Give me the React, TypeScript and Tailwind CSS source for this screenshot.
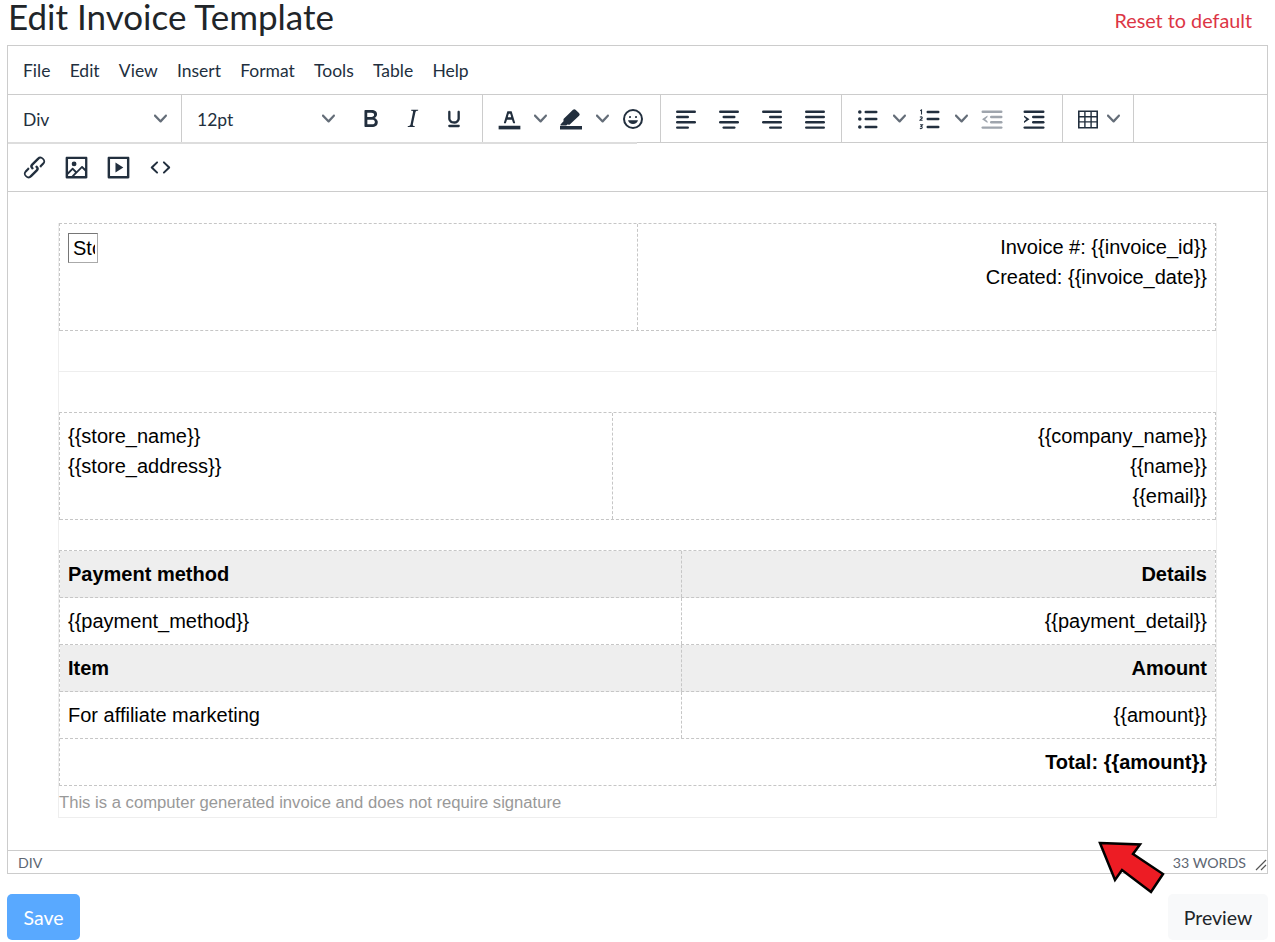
import type { ReactNode } from 'react';

const uiFont = "font-['Lato',sans-serif]";
const docFont = "font-['Liberation_Sans',Arial,sans-serif]";

function Btn({ children, muted, size = 24 }: { children: ReactNode; muted?: boolean; size?: number }) {
  return (
    <div className="w-[42px] h-full flex items-center justify-center shrink-0">
      <svg viewBox="0 0 24 24" width={size} height={size} fill={muted ? '#9fa5ad' : '#222f3e'}>
        {children}
      </svg>
    </div>
  );
}

function Chevron({ className = 'w-[20px]' }: { className?: string }) {
  return (
    <div className={`${className} h-full flex items-center justify-center shrink-0`}>
      <svg viewBox="0 0 10 10" width="13" height="13" fill="#222f3e" fillOpacity="0.7">
        <path d="M8.7 2.2c.3-.3.8-.3 1 0 .4.4.4.9 0 1.2L5.700 7.800c-.3.3-.9.3-1.200 0L.2 3.400a.8.8 0 0 1 0-1.200c.3-.3.8-.3 1.100 0L5 6l3.700-3.800z" />
      </svg>
    </div>
  );
}

function Lines({ rows }: { rows: [number, number][] }) {
  return (
    <>
      {rows.map(([x, w], i) => (
        <rect key={i} x={x} y={3.500 + i * 5.300} width={w} height="2.400" rx="1.200" />
      ))}
    </>
  );
}

function Select({ label, className }: { label: string; className: string }) {
  return (
    <div className={`${className} h-full flex items-center justify-between shrink-0 pl-[15px] pr-[14px]`}>
      <span className="text-[17.500px] text-[#222f3e] leading-none pt-[2px]">{label}</span>
      <Chevron className="w-[13px]" />
    </div>
  );
}

function ListLines() {
  return (
    <>
      <rect x="8.500" y="3.800" width="13" height="2.400" rx="1.200" />
      <rect x="8.500" y="10.800" width="13" height="2.400" rx="1.200" />
      <rect x="8.500" y="18.800" width="13" height="2.400" rx="1.200" />
    </>
  );
}

function IndentLines() {
  return (
    <>
      <rect x="1.500" y="3.500" width="21" height="2.400" rx="1.200" />
      <rect x="10" y="8.800" width="12.500" height="2.400" rx="1.200" />
      <rect x="10" y="14.100" width="12.500" height="2.400" rx="1.200" />
      <rect x="1.500" y="19.400" width="21" height="2.400" rx="1.200" />
    </>
  );
}

function Toolbar() {
  return (
    <>
      <div className="flex h-[48px] border-b border-[#ccc] relative">
        <div className="border-r border-[#ccc] w-[174px] flex shrink-0">
          <Select label="Div" className="w-full" />
        </div>
        <div className="border-r border-[#ccc] w-[301px] flex shrink-0">
          <Select label="12pt" className="w-[167px]" />
          <Btn size={29}>
            <path d="M7.8 19c-.3 0-.5 0-.6-.2l-.2-.5V5.7c0-.2 0-.4.2-.5l.6-.2h5c1.500 0 2.700.3 3.500 1 .7.6 1.100 1.400 1.100 2.500a3 3 0 0 1-.6 1.900c-.4.6-1 1-1.600 1.200.4.1.9.3 1.300.6s.8.7 1 1.200c.4.4.5 1 .5 1.600 0 1.300-.4 2.300-1.300 3-.8.7-2.100 1-3.800 1H7.800zm5-8.300c.6 0 1.200-.1 1.600-.5.4-.3.6-.7.6-1.300 0-1.100-.8-1.700-2.400-1.700H9.300v3.500h3.400zm.5 6c.7 0 1.300-.1 1.700-.4.4-.4.6-.9.6-1.500s-.2-1-.7-1.400c-.4-.3-1-.4-2-.4H9.400v3.800h4z" />
          </Btn>
          <Btn size={29}>
            <path d="M16.700 4.700l-.1.9h-.3c-.6 0-1 0-1.400.3-.3.3-.4.6-.5 1.100l-2.100 9.800v.6c0 .5.4.8 1.400.8h.2l-.2.8H8l.2-.8h.2c1.100 0 1.800-.5 2-1.500l2-9.800.1-.5c0-.6-.4-.8-1.400-.8h-.3l.2-.9h5.800z" />
          </Btn>
          <Btn size={28}>
            <path d="M16 5c.6 0 1 .4 1 1v5.500a4 4 0 0 1-.4 1.800l-1 1.400a5.300 5.300 0 0 1-5.500 1 5 5 0 0 1-1.600-1c-.5-.4-.8-.9-1.100-1.400a4 4 0 0 1-.4-1.800V6c0-.6.4-1 1-1s1 .4 1 1v5.500c0 .3 0 .6.2 1l.6.7a3.300 3.300 0 0 0 2.200.8 3.400 3.400 0 0 0 2.200-.8c.3-.2.4-.5.6-.8l.2-.9V6c0-.6.4-1 1-1zM8 17h8c.6 0 1 .4 1 1s-.4 1-1 1H8a1 1 0 0 1 0-2z" />
          </Btn>
        </div>
        <div className="border-r border-[#ccc] w-[178px] flex pl-[5px] shrink-0">
          <Btn size={29}>
            <path d="M3 18h18v3H3z" />
            <path d="M8.700 16h-.8a.5.5 0 0 1-.5-.6l2.700-9c.1-.3.3-.4.5-.4h2.800c.2 0 .4.1.5.4l2.700 9a.5.5 0 0 1-.5.6h-.8a.5.5 0 0 1-.4-.4l-.7-2.200c0-.3-.3-.4-.5-.4h-3.400c-.2 0-.4.1-.5.4l-.7 2.200c0 .3-.2.4-.4.4zm2.600-7.600l-.6 2a.5.5 0 0 0 .5.6h1.600a.5.5 0 0 0 .5-.6l-.6-2c0-.3-.3-.4-.5-.4h-.4c-.2 0-.4.1-.5.4z" />
          </Btn>
          <Chevron />
          <Btn>
            <path d="M1 19h22v3.500H1z" />
            <path d="M1.500 17.500l3-3.200v-2.300L14 2.800a2 2 0 0 1 2.800.1l3.200 3a2 2 0 0 1 .1 2.800L10.500 17.800l-2.200-.3-1 1H1.500z" />
          </Btn>
          <Chevron />
          <Btn>
            <path d="M9 11c.6 0 1-.4 1-1s-.4-1-1-1a1 1 0 0 0-1 1c0 .6.4 1 1 1zm6 0c.6 0 1-.4 1-1s-.4-1-1-1a1 1 0 0 0-1 1c0 .6.4 1 1 1zm-3 6c2.400 0 4.500-1.600 5-3.800H7c.5 2.200 2.600 3.800 5 3.800zM12 2a10 10 0 1 0 0 20 10 10 0 0 0 0-20zm0 18a8 8 0 1 1 0-16 8 8 0 0 1 0 16z" />
          </Btn>
        </div>
        <div className="border-r border-[#ccc] w-[181px] flex gap-[1px] pl-[4px] shrink-0">
          <Btn><Lines rows={[[2, 20], [2, 13], [2, 20], [2, 13]]} /></Btn>
          <Btn><Lines rows={[[2, 20], [5.500, 13], [2, 20], [5.500, 13]]} /></Btn>
          <Btn><Lines rows={[[2, 20], [9, 13], [2, 20], [9, 13]]} /></Btn>
          <Btn><Lines rows={[[2, 20], [2, 20], [2, 20], [2, 20]]} /></Btn>
        </div>
        <div className="border-r border-[#ccc] w-[221px] flex pl-[5px] shrink-0">
          <Btn>
            <circle cx="3.800" cy="5" r="1.800" />
            <circle cx="3.800" cy="12" r="1.800" />
            <circle cx="3.800" cy="20" r="1.800" />
            <ListLines />
          </Btn>
          <Chevron />
          <Btn>
            <path d="M2.200 3.800l1.300-.8v4.400" fill="none" stroke="#222f3e" strokeWidth="1.100" />
            <path d="M2 10.300c.6-.8 2.400-.6 2.200.5-.1.700-1.600 1.400-2.200 2.500h2.600" fill="none" stroke="#222f3e" strokeWidth="1.100" />
            <path d="M2 17.800h2.400l-1.300 1.600c1.300-.2 1.800 2-.2 2.200-.4 0-.8-.1-1-.3" fill="none" stroke="#222f3e" strokeWidth="1.100" />
            <ListLines />
          </Btn>
          <Chevron />
          <Btn muted>
            <IndentLines />
            <path d="M7.500 8.500v1.600L5.200 12.200l2.300 2.100v1.600L2 12.200z" />
          </Btn>
          <Btn>
            <IndentLines />
            <path d="M2 8.500v1.600l2.300 2.100L2 14.300v1.600l5.500-3.700z" />
          </Btn>
        </div>
        <div className="border-r border-[#ccc] w-[71px] flex pl-[4px] shrink-0">
          <Btn>
            <path d="M2 3.500h20v18H2zm1.600 1.600v4h4.600v-4zm6 0v4h4.800v-4zm6.200 0v4h4.600v-4zM3.600 10.500v3.700h4.600v-3.700zm6 0v3.700h4.800v-3.700zm6.200 0v3.700h4.600v-3.700zM3.600 15.600v4.300h4.600v-4.300zm6 0v4.300h4.800v-4.300zm6.200 0v4.300h4.600v-4.300z" fillRule="evenodd" />
          </Btn>
          <Chevron className="w-[20px] -ml-[6px]" />
        </div>
        <div className="absolute left-0 top-[47px] w-[629px] h-[2px] bg-[#ddd]" />
      </div>
      <div className="flex h-[49px] pl-[5px] border-b border-[#ccc]">
        <Btn size={29}>
          <path d="M6.200 12.300a1 1 0 0 1 1.400 1.400l-2 2a2 2 0 1 0 2.800 2.800l4.800-4.800a1 1 0 0 0 0-1.400 1 1 0 1 1 1.400-1.300 2.900 2.900 0 0 1 0 4.100l-4.800 4.800a3.900 3.900 0 0 1-5.500-5.500l2-2zm11.600-.6a1 1 0 0 1-1.400-1.400l2-2a2 2 0 1 0-2.800-2.800L10.800 10.300a1 1 0 0 0 0 1.400 1 1 0 1 1-1.400 1.300 2.900 2.900 0 0 1 0-4.100l4.800-4.800a3.900 3.900 0 0 1 5.500 5.500l-2 2z" />
        </Btn>
        <Btn size={29}>
          <path d="m5 15.700 3.300-3.200c.3-.3.700-.3 1 0L12 15l4.100-4c.3-.4.800-.4 1 0l2 1.900V5H5v10.700zM5 18v1h3l2.800-2.900-2-2L5 17.900zm14-3-2.500-2.400-6.400 6.500H19v-4zM4 3h16c.6 0 1 .4 1 1v16c0 .6-.4 1-1 1H4a1 1 0 0 1-1-1V4c0-.6.4-1 1-1zm6 8a2 2 0 1 0 0-4 2 2 0 0 0 0 4z" />
        </Btn>
        <Btn size={29}>
          <path d="M4 3h16c.6 0 1 .4 1 1v16c0 .6-.4 1-1 1H4a1 1 0 0 1-1-1V4c0-.6.4-1 1-1zm1 2v14h14V5H5zm4.500 2.800 6.500 4.200-6.500 4.200z" fillRule="evenodd" />
        </Btn>
        <Btn size={29}>
          <path d="M9.800 15.700c.3.300.3.800 0 1-.3.400-.9.400-1.200 0l-4.400-4.100a.8.8 0 0 1 0-1.200l4.400-4.200c.3-.3.900-.3 1.200 0 .3.300.3.800 0 1.100L6 12l3.800 3.700zM14.200 15.700c-.3.300-.3.800 0 1 .4.400.9.400 1.200 0l4.400-4.100c.3-.3.300-.9 0-1.200l-4.400-4.200a.8.8 0 0 0-1.200 0c-.3.300-.3.800 0 1.100L18 12l-3.800 3.700z" />
        </Btn>
      </div>
    </>
  );
}

function Row({ left, right, height, split, shaded, bold }: { left: ReactNode; right: ReactNode; height: string; split: string; shaded?: boolean; bold?: boolean }) {
  return (
    <div className={`flex ${height} border-b border-dashed border-[#c6c6c6] ${shaded ? 'bg-[#eee]' : ''} ${bold ? 'font-bold' : ''}`}>
      <div className={`${split} shrink-0 border-r border-dashed border-[#c6c6c6] px-[8px] py-[8px]`}>{left}</div>
      <div className="flex-1 px-[8px] py-[8px] text-right">{right}</div>
    </div>
  );
}

function InvoiceDoc() {
  return (
    <div className={`${docFont} w-[1159px] text-[20px] leading-[30px] text-black border-x border-b border-[#eee]`}>
      <div className="border-t border-x border-dashed border-[#c6c6c6]">
        <Row
          height="h-[107px]"
          split="w-[578px]"
          left={
            <input
              readOnly
              value="Store"
              className="block w-[30px] h-[30px] mt-[1px] border border-[#767676] border-r-[#aaa] border-b-[#aaa] pl-[4px] pr-[2px] outline-none"
            />
          }
          right={
            <>
              <div>Invoice #: {'{{invoice_id}}'}</div>
              <div>Created: {'{{invoice_date}}'}</div>
            </>
          }
        />
      </div>
      <div className="h-[41px] border-b border-[#eee]" />
      <div className="h-[40px]" />
      <div className="border-t border-x border-dashed border-[#c6c6c6]">
        <Row
          height="h-[107px]"
          split="w-[553px]"
          left={
            <>
              <div>{'{{store_name}}'}</div>
              <div>{'{{store_address}}'}</div>
            </>
          }
          right={
            <>
              <div>{'{{company_name}}'}</div>
              <div>{'{{name}}'}</div>
              <div>{'{{email}}'}</div>
            </>
          }
        />
      </div>
      <div className="h-[30px]" />
      <div className="border border-dashed border-[#c6c6c6]">
        <Row height="h-[47px]" split="w-[622px]" shaded bold left="Payment method" right="Details" />
        <Row height="h-[47px]" split="w-[622px]" left={'{{payment_method}}'} right={'{{payment_detail}}'} />
        <Row height="h-[47px]" split="w-[622px]" shaded bold left="Item" right="Amount" />
        <Row height="h-[47px]" split="w-[622px]" left="For affiliate marketing" right={'{{amount}}'} />
        <div className="h-[46px] px-[8px] py-[8px] text-right font-bold">Total: {'{{amount}}'}</div>
      </div>
      <div className="h-[31px] text-[16.650px] leading-[33px] text-[#999]">
        This is a computer generated invoice and does not require signature
      </div>
    </div>
  );
}

export default function App() {
  return (
    <div className={`${uiFont} relative w-[1275px] h-[942px] overflow-hidden bg-white px-[7px]`}>
      <div className="flex justify-between items-start h-[45px] text-[#212529]">
        <h1 className="text-[35px] leading-[34px] -mt-[1px] ml-px font-normal">Edit Invoice Template</h1>
        <a className="text-[19.800px] leading-[24px] mt-[8px] mr-[16px] text-[#dc3545]">Reset to default</a>
      </div>

      <div className="border border-[#ccc] w-[1261px] h-[829px] flex flex-col">
        <div className="h-[49px] border-b border-[#ccc] flex items-center gap-[19.200px] px-[15px] pt-[2px] text-[17.500px] text-[#222f3e]">
          {['File', 'Edit', 'View', 'Insert', 'Format', 'Tools', 'Table', 'Help'].map((m) => (
            <span key={m}>{m}</span>
          ))}
        </div>
        <Toolbar />
        <div className="flex-1 pl-[50px] pt-[31px]">
          <InvoiceDoc />
        </div>
        <div className="h-[23px] border-t border-[#ccc] flex items-center justify-between pl-[10px] pt-[2px] text-[14.200px] text-[#5d6672]">
          <span>DIV</span>
          <div className="flex items-center gap-[9px]">
            <span>33 WORDS</span>
            <svg viewBox="0 0 12 12" width="12" height="12" className="mt-[4px]">
              <path d="M1 11 11 1M6 11 11 6" stroke="#555" strokeWidth="1.200" />
            </svg>
          </div>
        </div>
      </div>

      <div className="flex justify-between items-start mt-[20px] text-[19.500px]">
        <button className="w-[73px] h-[46px] pt-[2px] rounded-[5px] bg-[#59a9ff] text-white">Save</button>
        <button className="w-[100px] h-[46px] pt-[2px] rounded-[5px] bg-[#f8f9fa] text-[#212529]">Preview</button>
      </div>

      <svg className="absolute left-[1090px] top-[835px]" width="85" height="65" viewBox="1090 835 85 65">
        <polygon points="1100,843 1140,844.500 1133,854 1163,874 1151,892 1122,870 1115,880" fill="#ed1c24" stroke="#000" strokeWidth="2.500" />
      </svg>
    </div>
  );
}
